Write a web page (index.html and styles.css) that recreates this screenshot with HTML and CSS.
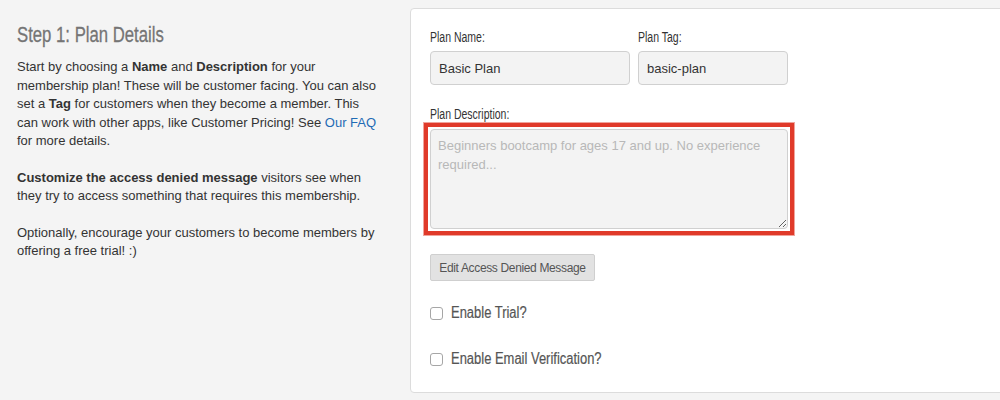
FILE: index.html
```html
<!DOCTYPE html>
<html>
<head>
<meta charset="utf-8">
<link rel="stylesheet" href="styles.css">
</head>
<body>
<div class="page">
  <div class="intro">
    <h2 class="title"><span class="narrow">Step 1: Plan Details</span></h2>
    <p>Start by choosing a <b>Name</b> and <b>Description</b> for your membership plan! These will be customer facing. You can also set a <b>Tag</b> for customers when they become a member. This can work with other apps, like Customer Pricing! See <a href="#">Our FAQ</a> for more details.</p>
    <p><b>Customize the access denied message</b> visitors see when they try to access something that requires this membership.</p>
    <p>Optionally, encourage your customers to become members by offering a free trial! :)</p>
  </div>
  <div class="card">
    <div class="row">
      <div class="field name">
        <label class="lbl"><span class="narrow">Plan Name:</span></label>
        <input class="inp" type="text" value="Basic Plan">
      </div>
      <div class="field tag">
        <label class="lbl"><span class="narrow">Plan Tag:</span></label>
        <input class="inp" type="text" value="basic-plan">
      </div>
    </div>
    <div class="field desc">
      <label class="lbl lbl-desc"><span class="narrow">Plan Description:</span></label>
      <div class="highlight">
        <textarea class="ta" placeholder="Beginners bootcamp for ages 17 and up. No experience required..."></textarea>
      </div>
    </div>
    <button class="btn" type="button">Edit Access Denied Message</button>
    <label class="check first"><span class="box"></span><span class="ctext"><span class="narrow">Enable Trial?</span></span></label>
    <label class="check"><span class="box"></span><span class="ctext"><span class="narrow">Enable Email Verification?</span></span></label>
  </div>
</div>
</body>
</html>
```
FILE: styles.css
```css
html, body {
  margin: 0;
  padding: 0;
  background: #f4f4f4;
  overflow: hidden;
}
.page {
  display: flex;
  width: 1000px;
  height: 400px;
  font-family: "Liberation Sans", Arial, sans-serif;
  font-size: 13px;
  line-height: 18.5px;
  color: #333;
}
.narrow {
  display: inline-block;
  white-space: nowrap;
  transform-origin: left center;
}
.intro {
  width: 362px;
  padding-left: 17px;
  padding-right: 31px;
  flex: none;
}
.title {
  font-family: "Liberation Sans", Arial, sans-serif;
  font-weight: normal;
  font-size: 22px;
  line-height: 26px;
  color: #757575;
  margin: 22px 0 10px 0;
}
.title .narrow {
  transform: scaleX(0.76);
  -webkit-text-stroke: 0.3px #757575;
}
.intro p {
  margin: 0 0 18px 0;
}
.intro a {
  color: #1f6bb5;
  text-decoration: none;
}
.card {
  flex: none;
  width: 600px;
  height: 385px;
  margin-top: 8px;
  background: #fff;
  border: 1px solid #dcdcdc;
  border-radius: 4px;
  box-sizing: border-box;
  padding: 20px 0 0 19px;
}
.row {
  display: flex;
  gap: 8px;
}
.field {
  display: flex;
  flex-direction: column;
}
.lbl {
  font-size: 14px;
  line-height: 17px;
  color: #333;
  margin-bottom: 5px;
}
.lbl .narrow {
  transform: scaleX(0.75);
}
.lbl-desc {
  margin-bottom: 0;
}
.inp {
  height: 34px;
  box-sizing: border-box;
  border: 1px solid #d0d0d0;
  border-radius: 4px;
  background: #f3f3f3;
  font-family: "Liberation Sans", Arial, sans-serif;
  font-size: 13px;
  color: #333;
  padding: 0 8px;
  margin: 0;
}
.name .inp { width: 200px; }
.tag .inp { width: 150px; }
.desc {
  margin-top: 21px;
}
.highlight {
  width: 358px;
  margin-left: -6px;
  padding: 2px;
  border: 4px solid #e03a2a;
  box-shadow: 0 0 0 1px #f0a49c;
  background: #fff;
}
.ta {
  display: block;
  width: 358px;
  height: 100px;
  box-sizing: border-box;
  border: 1px solid #d0d0d0;
  border-radius: 4px;
  background: #f3f3f3;
  font-family: "Liberation Sans", Arial, sans-serif;
  font-size: 13px;
  line-height: 18.5px;
  padding: 7px 7px;
  margin: 0;
  outline: none;
  resize: both;
}
.ta::placeholder {
  color: #b8b8b8;
}
.btn {
  display: block;
  margin-top: 19px;
  width: 165px;
  height: 27px;
  box-sizing: border-box;
  background: #e2e2e2;
  border: 1px solid #cfcfcf;
  border-radius: 2px;
  font-family: "Liberation Sans", Arial, sans-serif;
  font-size: 12px;
  letter-spacing: -0.35px;
  color: #555;
  padding: 0;
}
.check {
  display: flex;
  align-items: center;
  gap: 8px;
  height: 20px;
  margin-top: 26px;
}
.check.first {
  margin-top: 22px;
}
.box {
  width: 13px;
  height: 13px;
  box-sizing: border-box;
  border: 1px solid #a6a6a6;
  border-radius: 3px;
  background: #fff;
  flex: none;
}
.ctext {
  font-size: 16px;
  color: #555;
}
.ctext .narrow {
  transform: scaleX(0.81);
  -webkit-text-stroke: 0.2px #555;
}
```
